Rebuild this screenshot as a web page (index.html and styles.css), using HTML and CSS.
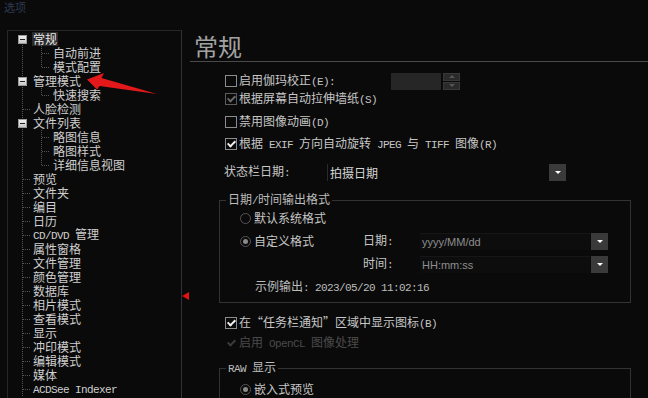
FILE: index.html
```html
<!DOCTYPE html>
<html>
    <head>
        <meta charset="UTF-8">
        <title>选项</title>
        <link rel="stylesheet" href="styles.css">
    </head>
    <body>
        <div class="title">选项</div>
        <div class="main">
            <div class="tree">
                <div class="tree-list">
                    <div class="row"><span class="box"></span><span class="txt sel">常规</span></div>
                    <div class="kids">
                        <div class="row child"><span class="twig"></span><span class="txt">自动前进</span></div>
                        <div class="row child last"><span class="twig"></span><span class="txt">模式配置</span></div>
                    </div>
                    <div class="row"><span class="box"></span><span class="txt">管理模式</span></div>
                    <div class="kids">
                        <div class="row child last"><span class="twig"></span><span class="txt">快速搜索</span></div>
                    </div>
                    <div class="row"><span class="twig"></span><span class="txt">人脸检测</span></div>
                    <div class="row"><span class="box"></span><span class="txt">文件列表</span></div>
                    <div class="kids">
                        <div class="row child"><span class="twig"></span><span class="txt">略图信息</span></div>
                        <div class="row child"><span class="twig"></span><span class="txt">略图样式</span></div>
                        <div class="row child last"><span class="twig"></span><span class="txt">详细信息视图</span></div>
                    </div>
                    <div class="row"><span class="twig"></span><span class="txt">预览</span></div>
                    <div class="row"><span class="twig"></span><span class="txt">文件夹</span></div>
                    <div class="row"><span class="twig"></span><span class="txt">编目</span></div>
                    <div class="row"><span class="twig"></span><span class="txt">日历</span></div>
                    <div class="row"><span class="twig"></span><span class="txt"><span class="en">CD/DVD </span>管理</span></div>
                    <div class="row"><span class="twig"></span><span class="txt">属性窗格</span></div>
                    <div class="row"><span class="twig"></span><span class="txt">文件管理</span></div>
                    <div class="row"><span class="twig"></span><span class="txt">颜色管理</span></div>
                    <div class="row"><span class="twig"></span><span class="txt">数据库</span></div>
                    <div class="row"><span class="twig"></span><span class="txt">相片模式</span></div>
                    <div class="row"><span class="twig"></span><span class="txt">查看模式</span></div>
                    <div class="row"><span class="twig"></span><span class="txt">显示</span></div>
                    <div class="row"><span class="twig"></span><span class="txt">冲印模式</span></div>
                    <div class="row"><span class="twig"></span><span class="txt">编辑模式</span></div>
                    <div class="row"><span class="twig"></span><span class="txt">媒体</span></div>
                    <div class="row"><span class="twig"></span><span class="txt"><span class="en">ACDSee Indexer</span></span></div>
                </div>
                <span class="scroll-mark"></span>
            </div>

            <div class="pane">
                <div class="heading">常规</div>

                <div class="opts">
                    <div class="opt first">
                        <span class="cb"></span>
                        <span class="opt-label wide">启用伽玛校正<span class="en">(E):</span></span>
                        <span class="spin-field"></span>
                        <span class="spin-btns">
                            <span class="spin-up"></span>
                            <span class="spin-down"></span>
                        </span>
                    </div>
                    <div class="opt">
                        <span class="cb on dim"></span>
                        <span class="opt-label">根据屏幕自动拉伸墙纸<span class="en">(S)</span></span>
                    </div>
                    <div class="opt gap5">
                        <span class="cb"></span>
                        <span class="opt-label">禁用图像动画<span class="en">(D)</span></span>
                    </div>
                    <div class="opt gap4">
                        <span class="cb on"></span>
                        <span class="opt-label">根据<span class="en"> EXIF </span>方向自动旋转<span class="en"> JPEG </span>与<span class="en"> TIFF </span>图像<span class="en">(R)</span></span>
                    </div>

                    <div class="opt status">
                        <span class="status-label">状态栏日期<span class="en">:</span></span>
                        <span class="select">
                            <span class="select-val">拍摄日期</span>
                            <span class="drop"></span>
                        </span>
                    </div>

                    <fieldset class="group">
                        <legend>日期<span class="en">/</span>时间输出格式</legend>
                        <div class="fmt-grid">
                            <div class="radio-row full"><span class="rb"></span>默认系统格式</div>
                            <div class="radio-row"><span class="rb on"></span>自定义格式</div>
                            <div class="fmt-label">日期<span class="en">:</span></div>
                            <div class="combo"><span class="combo-val">yyyy/MM/dd</span><span class="drop"></span></div>
                            <div class="fmt-label col2">时间<span class="en">:</span></div>
                            <div class="combo"><span class="combo-val">HH:mm:ss</span><span class="drop"></span></div>
                            <div class="sample">示例输出<span class="en">: 2023/05/20 11:02:16</span></div>
                        </div>
                    </fieldset>

                    <div class="opt tray">
                        <span class="cb on"></span>
                        <span class="opt-label">在“任务栏通知”区域中显示图标<span class="en">(B)</span></span>
                    </div>
                    <div class="opt disabled">
                        <span class="cb on ghost"></span>
                        <span class="opt-label">启用<span class="en"> OpenCL </span>图像处理</span>
                    </div>

                    <fieldset class="group raw">
                        <legend><span class="en">RAW </span>显示</legend>
                        <div class="radio-row"><span class="rb on"></span>嵌入式预览</div>
                    </fieldset>
                </div>
            </div>
        </div>

        <svg class="arrow" width="648" height="398" viewBox="0 0 648 398">
            <polygon points="87,79.5 104,73 101.5,78 157,94 99.5,86 97,89.5" fill="#e3181a"/>
        </svg>
    </body>
</html>
```

FILE: styles.css
```css
html, body {
    margin: 0;
    height: 100%;
    overflow: hidden;
}

body {
    position: relative;
    background-color: #0a0a0a;
    color: #c6c6c6;
    font-family: "Noto Sans CJK SC", sans-serif;
    font-size: 12px;
    line-height: 14px;
}

.en {
    font-family: "Liberation Mono", monospace;
    font-size: 11px;
    letter-spacing: -0.6px;
}

.title {
    height: 30px;
    padding-left: 4px;
    font-size: 11px;
    line-height: 14px;
    color: #2e3b52;
}

.main {
    display: flex;
    height: 368px;
}

/* tree */

.tree {
    position: relative;
    margin-left: 7px;
    width: 175px;
    border: 1px solid #262626;
    border-right-color: #333;
    border-bottom: none;
    padding: 1px 0 0 10px;
    box-sizing: border-box;
}

.tree-list {
    background-image: repeating-linear-gradient(to bottom, #555 0 1px, transparent 1px 2px);
    background-size: 1px 100%;
    background-position: 4px 7px;
    background-repeat: no-repeat;
}

.row {
    display: flex;
    align-items: center;
    height: 14px;
    color: #cfcfcf;
}

.row.child {
    padding-left: 20px;
}

.box {
    width: 7px;
    height: 7px;
    margin-right: 6px;
    border: 1px solid #9a9a9a;
    background: linear-gradient(#f0f0f0, #c8c8c8);
    display: flex;
    align-items: center;
    justify-content: center;
}

.box::after {
    content: "";
    width: 5px;
    height: 1px;
    background-color: #222;
}

.twig {
    width: 13px;
    height: 14px;
    margin-right: 2px;
    background-image: repeating-linear-gradient(to right, #555 0 1px, transparent 1px 2px);
    background-size: 8px 1px;
    background-position: 5px 7px;
    background-repeat: no-repeat;
}

.child .twig {
    background-image:
        repeating-linear-gradient(to right, #555 0 1px, transparent 1px 2px),
        repeating-linear-gradient(to bottom, #555 0 1px, transparent 1px 2px);
    background-size: 8px 1px, 1px 14px;
    background-position: 4px 7px, 3px 0;
}

.child.last .twig {
    background-size: 8px 1px, 1px 8px;
}

.txt {
    white-space: nowrap;
}

.sel {
    background-color: #2b2b2b;
    color: #e8e8e8;
    margin-left: -1px;
    padding: 0 1px;
}

.scroll-mark {
    position: absolute;
    right: -8px;
    top: 261px;
    width: 0;
    height: 0;
    border-top: 4px solid transparent;
    border-bottom: 4px solid transparent;
    border-right: 7px solid #e01212;
}

/* right pane */

.pane {
    flex: 1;
    padding-left: 1px;
}

.heading {
    margin-left: 7px;
    padding-left: 4px;
    padding-top: 2px;
    border-bottom: 1px solid #4a4a4a;
    box-sizing: border-box;
    height: 32px;
    font-size: 24px;
    line-height: 28px;
    color: #a2a2a2;
}

.opts {
    padding-left: 42px;
}

.opt {
    display: flex;
    align-items: center;
    height: 18px;
}

.opt.first {
    margin-top: 10px;
}

.opt.gap5 {
    margin-top: 5px;
}

.opt.gap4 {
    margin-top: 4px;
}

.cb {
    position: relative;
    width: 10px;
    height: 10px;
    border: 1px solid #8c8c8c;
    margin-right: 2px;
    flex-shrink: 0;
}

.cb.on::after {
    content: "";
    position: absolute;
    left: 3px;
    top: 0px;
    width: 3px;
    height: 6px;
    border-right: 2px solid #f2f2f2;
    border-bottom: 2px solid #f2f2f2;
    transform: rotate(45deg);
}

.cb.dim {
    border-color: #5c5c5c;
}

.cb.dim::after {
    border-color: #6a6a6a;
}

.cb.ghost {
    border-color: transparent;
}

.cb.ghost::after {
    border-color: #3c3c3c;
}

.opt-label {
    white-space: nowrap;
}

.opt-label.wide {
    width: 152px;
}

.spin-field {
    width: 50px;
    height: 17px;
    background-color: #262626;
}

.spin-btns {
    display: flex;
    flex-direction: column;
    gap: 1px;
    margin-left: 2px;
    height: 17px;
}

.spin-up, .spin-down {
    width: 15px;
    height: 6px;
    border: 1px solid #383838;
    background-color: #2a2a2a;
    display: flex;
    align-items: center;
    justify-content: center;
}

.spin-up::after {
    content: "";
    border-left: 3px solid transparent;
    border-right: 3px solid transparent;
    border-bottom: 3px solid #555;
}

.spin-down::after {
    content: "";
    border-left: 3px solid transparent;
    border-right: 3px solid transparent;
    border-top: 3px solid #555;
}

.opt.status {
    margin-top: 10px;
    margin-left: -1px;
}

.status-label {
    width: 103px;
}

.select {
    display: flex;
    width: 239px;
    height: 17px;
}

.select-val {
    flex: 1;
    border-left: 1px solid #2a2a2a;
    padding-left: 2px;
    line-height: 17px;
    color: #d6d6d6;
}

.drop {
    width: 17px;
    height: 17px;
    background-color: #3a3a3a;
    display: flex;
    align-items: center;
    justify-content: center;
}

.drop::after {
    content: "";
    border-left: 3px solid transparent;
    border-right: 3px solid transparent;
    border-top: 3px solid #fff;
    margin-top: 1px;
}

/* group boxes */

.group {
    margin: 11px 0 0 -6px;
    width: 412px;
    box-sizing: border-box;
    border: 1px solid #333;
    padding: 1px 0 6px 20px;
    min-width: 0;
}

.group legend {
    margin-left: -14px;
    padding: 0 2px;
    line-height: 14px;
    color: #bcbcbc;
}

.fmt-grid {
    display: grid;
    grid-template-columns: 123px 57px 188px;
    grid-auto-rows: 18px;
    row-gap: 5px;
    align-items: center;
}

.full {
    grid-column: 1 / 4;
}

.col2 {
    grid-column: 2;
}

.radio-row {
    display: flex;
    align-items: center;
    height: 18px;
    white-space: nowrap;
}

.rb {
    width: 9px;
    height: 9px;
    border: 1px solid #555;
    border-radius: 50%;
    margin-right: 3px;
    display: flex;
    align-items: center;
    justify-content: center;
}

.rb.on::after {
    content: "";
    width: 5px;
    height: 5px;
    border-radius: 50%;
    background-color: #8a8a8a;
}

.combo {
    display: flex;
    height: 17px;
    gap: 1px;
}

.combo-val {
    width: 168px;
    padding-left: 2px;
    background-color: #0d0d0d;
    border-top: 1px solid #161616;
    font-family: "Liberation Sans", sans-serif;
    font-size: 11px;
    line-height: 16px;
    color: #8e8e8e;
}

.sample {
    grid-column: 1 / 4;
    padding-left: 15px;
    color: #bdbdbd;
}

.opt.tray {
    margin-top: 11px;
}

.opt.disabled {
    margin-top: 2px;
    color: #4a4a4a;
}

.group.raw {
    margin-top: 8px;
    padding-top: 4px;
    height: 60px;
}

.arrow {
    position: absolute;
    left: 0;
    top: 0;
    pointer-events: none;
}
```
